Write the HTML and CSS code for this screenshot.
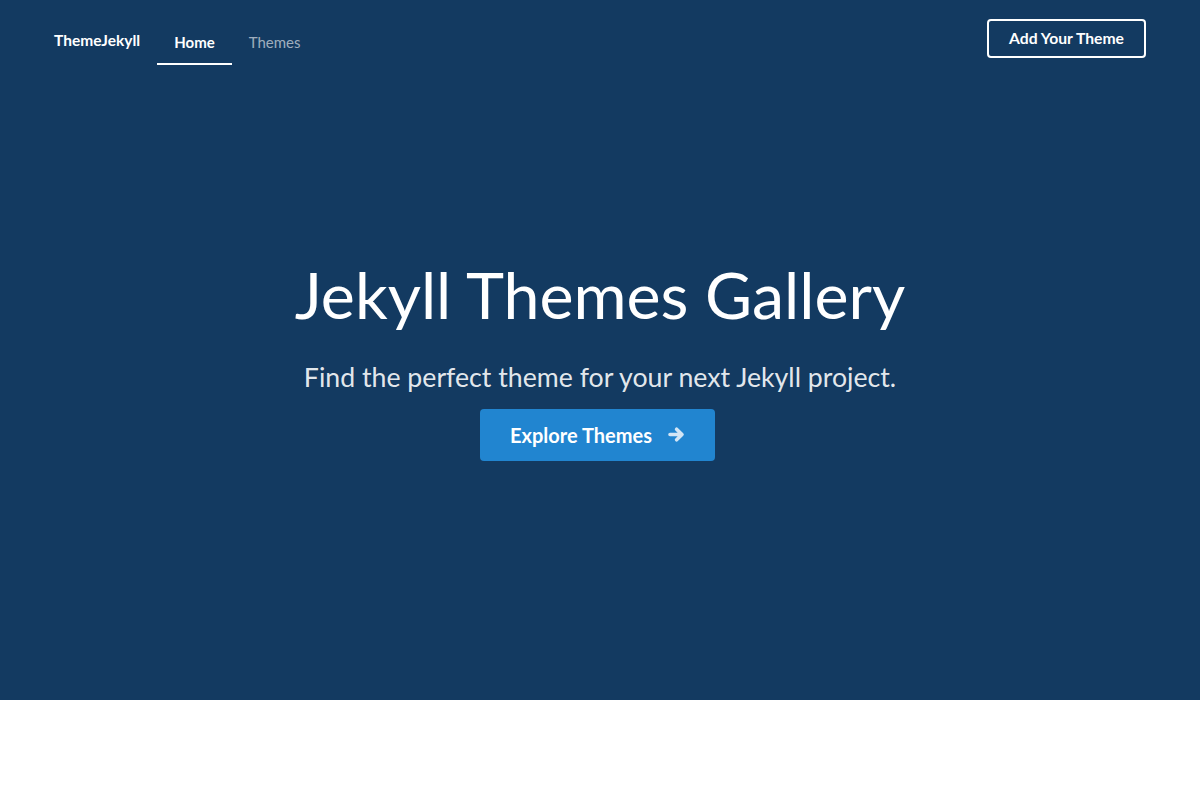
FILE: index.html
```html
<!DOCTYPE html>
<html lang="en">
<head>
<meta charset="utf-8">
<title>ThemeJekyll</title>
<link rel="stylesheet" href="styles.css">
</head>
<body>
<header class="masthead">
  <nav class="nav">
    <a class="brand" href="#">ThemeJekyll</a>
    <a class="nav-item active" href="#">Home</a>
    <a class="nav-item" href="#">Themes</a>
    <div class="nav-right">
      <a class="outline-btn" href="#">Add Your Theme</a>
    </div>
  </nav>
  <div class="hero">
    <h1 class="hero-title">Jekyll Themes Gallery</h1>
    <h2 class="hero-sub">Find the perfect theme for your next Jekyll project.</h2>
    <a class="primary-btn" href="#">Explore Themes
      <svg class="arrow" viewBox="0 0 17 17" width="17" height="17" aria-hidden="true"><path d="M2 8.5H14 M8.6 3.2L14 8.5L8.6 13.8" fill="none" stroke="currentColor" stroke-width="3.6" stroke-linecap="round" stroke-linejoin="round"/></svg>
    </a>
  </div>
</header>
<main class="content"></main>
</body>
</html>
```
FILE: styles.css
```css
* { box-sizing: border-box; }
html, body { margin: 0; padding: 0; }
body {
  font-family: Lato, "Open Sans", "Liberation Sans", sans-serif;
  background: #ffffff;
  color: #fff;
}
a { text-decoration: none; color: inherit; }

.masthead {
  height: 700px;
  background: #133a61;
  display: flex;
  flex-direction: column;
}

.nav {
  display: flex;
  align-items: flex-start;
  padding: 19px 37px 0;
}
.brand {
  font-weight: 700;
  font-size: 15.5px;
  line-height: 17px;
  padding: 13px 17px 0;
  color: #fff;
}
.nav-item {
  font-size: 15px;
  line-height: 17px;
  padding: 15px 17px 12px;
  border-bottom: 2px solid transparent;
  color: rgba(255, 255, 255, 0.6);
}
.nav-item.active {
  color: #fff;
  font-weight: 700;
  border-bottom-color: #fff;
}
.nav-right {
  margin-left: auto;
  padding: 0 17px;
}
.outline-btn {
  display: block;
  width: 159px;
  height: 39px;
  border: 2px solid #fff;
  border-radius: 4px;
  font-size: 15.7px;
  font-weight: 700;
  line-height: 17px;
  padding: 9px 0;
  text-align: center;
  color: #fff;
}

.hero {
  display: flex;
  flex-direction: column;
  align-items: center;
  padding-top: 197px;
}
.hero-title {
  margin: 0;
  font-size: 64.5px;
  font-weight: 400;
  line-height: 1;
  color: #fff;
}
.hero-sub {
  margin: 34px 0 0;
  font-size: 26.7px;
  font-weight: 400;
  line-height: 1.2;
  color: rgba(255, 255, 255, 0.9);
}
.primary-btn {
  margin: 16px 5px 0 0;
  display: flex;
  align-items: center;
  gap: 16px;
  height: 52px;
  padding: 0 30px 0 30px;
  background: #2185d0;
  border-radius: 4px;
  font-size: 20px;
  font-weight: 700;
  color: #fff;
}
.arrow {
  color: #d2e5f5;
  display: block;
}

.content {
  height: 100px;
  background: #fff;
}
```
